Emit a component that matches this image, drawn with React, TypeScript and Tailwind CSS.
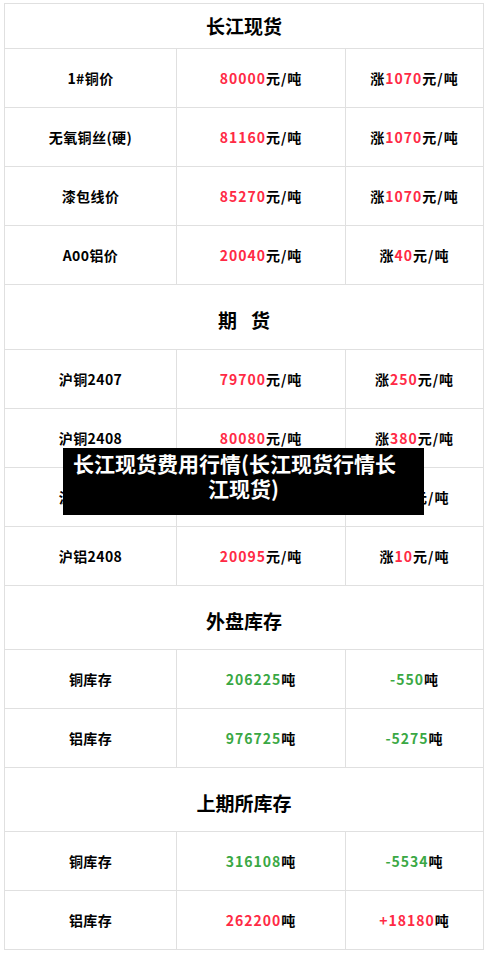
import { Fragment, type ReactNode } from "react";

const RED = "text-[#ff2a45]";
const GREEN = "text-[#3aa844]";

type Row = { name: string; a: ReactNode; b: ReactNode };
type Section = { title: ReactNode; key: string; h: string; rows: Row[] };

const price = (n: string) => (
  <>
    <span className={RED}>{n}</span>元/吨
  </>
);
const up = (n: string) => (
  <>
    涨<span className={RED}>{n}</span>元/吨
  </>
);
const ton = (n: string, color: string) => (
  <>
    <span className={color}>{n}</span>吨
  </>
);

const sections: Section[] = [
  {
    key: "spot",
    title: "长江现货",
    h: "h-[45px]",
    rows: [
      { name: "1#铜价", a: price("80000"), b: up("1070") },
      { name: "无氧铜丝(硬)", a: price("81160"), b: up("1070") },
      { name: "漆包线价", a: price("85270"), b: up("1070") },
      { name: "A00铝价", a: price("20040"), b: up("40") },
    ],
  },
  {
    key: "futures",
    // the gap between the two characters is wider than a space, narrower than a full em
    title: (
      <>
        期<span className="ml-[14px]">货</span>
      </>
    ),
    h: "h-[65px] pt-[7px]",
    rows: [
      { name: "沪铜2407", a: price("79700"), b: up("250") },
      { name: "沪铜2408", a: price("80080"), b: up("380") },
      { name: "沪铝2407", a: price("20080"), b: up("15") },
      { name: "沪铝2408", a: price("20095"), b: up("10") },
    ],
  },
  {
    key: "lme",
    title: "外盘库存",
    h: "h-[64px] pt-[7px]",
    rows: [
      { name: "铜库存", a: ton("206225", GREEN), b: ton("-550", GREEN) },
      { name: "铝库存", a: ton("976725", GREEN), b: ton("-5275", GREEN) },
    ],
  },
  {
    key: "shfe",
    title: "上期所库存",
    h: "h-[64px] pt-[7px]",
    rows: [
      { name: "铜库存", a: ton("316108", GREEN), b: ton("-5534", GREEN) },
      { name: "铝库存", a: ton("262200", RED), b: ton("+18180", RED) },
    ],
  },
];

const cell = "border border-[#e0e0e0] text-center align-middle";

export default function App() {
  return (
    <div className="relative w-[488px] h-[957px] bg-white font-['Noto_Sans_CJK_SC','Noto_Sans',sans-serif] text-black">
      <table className="ml-[4px] mt-[3px] w-[480px] border-collapse table-fixed">
        <colgroup>
          <col className="w-[172px]" />
          <col className="w-[169px]" />
          <col />
        </colgroup>
        <tbody>
          {sections.map((s) => (
            <Fragment key={s.key}>
              <tr>
                <td colSpan={3} className={`${cell} ${s.h} text-[19px] font-bold`}>
                  {s.title}
                </td>
              </tr>
              {s.rows.map((r) => (
                <tr key={s.key + r.name} className="h-[59px] text-[14px] font-bold tracking-[1px]">
                  <td className={`${cell} tracking-[0.4px]`}>{r.name}</td>
                  <td className={cell}>{r.a}</td>
                  <td className={cell}>{r.b}</td>
                </tr>
              ))}
            </Fragment>
          ))}
        </tbody>
      </table>

      {/* title banner lying over the futures rows */}
      <div className="absolute left-[63px] top-[445px] w-[361px] h-[67px] bg-black px-[10px] pt-[3px] text-left [text-align-last:center] text-[21px] leading-[25px] font-bold text-white">
        长江现货费用行情(长江现货行情长江现货)
      </div>
    </div>
  );
}
